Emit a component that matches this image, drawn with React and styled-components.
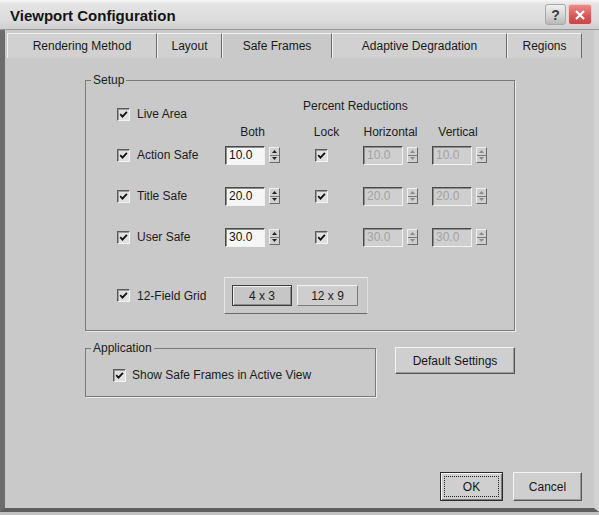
import React from 'react';
import styled, { createGlobalStyle } from 'styled-components';

const Global = createGlobalStyle`
  html, body { margin: 0; padding: 0; background: #c2c2c2; }
  body { font-family: "Liberation Sans", Arial, sans-serif; }
`;

const Window = styled.div`
  width: 599px;
  height: 515px;
  display: flex;
  flex-direction: column;
  background: #c2c2c2;
  font-size: 12px;
  color: #1c1c1c;
  overflow: hidden;
`;

const TitleBar = styled.div`
  height: 30px;
  flex: none;
  box-sizing: border-box;
  display: flex;
  align-items: center;
  padding: 0 7px 0 10px;
  background: linear-gradient(#f6f6f6 0, #e4e4e4 14%, #dcdcdc 70%, #cecece 100%);
  border-bottom: 1px solid #9a9a9a;
`;

const Title = styled.div`
  flex: 1;
  font-weight: bold;
  font-size: 15px;
  color: #141414;
  padding-top: 2px;
`;

const CaptionButtons = styled.div`
  display: flex;
  gap: 2px;
  align-items: center;
`;

const CaptionButton = styled.div`
  width: ${p => p.$w}px;
  height: 21px;
  box-sizing: border-box;
  border-radius: 3px;
  display: flex;
  align-items: center;
  justify-content: center;
  font-weight: bold;
  font-size: 14px;
  color: #3a3a3a;
  border: 1px solid ${p => (p.$danger ? '#f2c8c8' : '#a8a8a8')};
  background: ${p =>
    p.$danger
      ? 'linear-gradient(#ec8a8a, #d45656 60%, #c84848)'
      : 'linear-gradient(#f0f0f0, #d2d2d2 60%, #b8b8b8)'};
`;

const Frame = styled.div`
  flex: 1;
  min-height: 0;
  display: flex;
  flex-direction: column;
  background: #c9c9c9;
  border-left: 5px solid #6c6c6c;
  border-right: 5px solid #d2d2d2;
  border-bottom: 4px solid #5e5e5e;
  margin-bottom: 3px;
`;

const TabStrip = styled.div`
  display: flex;
  margin-top: 3px;
  padding-left: 2px;
  height: 25px;
  flex: none;
`;

const Tab = styled.div`
  width: ${p => p.$w}px;
  box-sizing: border-box;
  display: flex;
  align-items: center;
  justify-content: center;
  white-space: nowrap;
  background: ${p => (p.$active ? '#c9c9c9' : '#d1d1d1')};
  border-top: 1px solid #f2f2f2;
  border-left: 1px solid #f2f2f2;
  border-right: 1px solid #6a6a6a;
  color: #1a1a1a;
`;

const Panel = styled.div`
  flex: 1;
  display: flex;
  flex-direction: column;
  padding: 15px 0 0 80px;
`;

const Group = styled.fieldset`
  margin: 0;
  min-width: 0;
  width: ${p => p.$w}px;
  box-sizing: border-box;
  padding: 0;
  border: 1px solid #7a7a7a;
  box-shadow: 1px 1px 0 #ececec;
`;

const GroupLabel = styled.legend`
  margin-left: 5px;
  padding: 0 2px;
  line-height: 14px;
  font-size: 12px;
  color: #1c1c1c;
`;

const GroupBody = styled.div`
  padding: ${p => p.$pad};
`;

const Row = styled.div`
  display: grid;
  grid-template-columns: 108px 90px 48px 69px 57px;
  align-items: center;
  height: ${p => p.$h}px;
  margin-top: ${p => p.$mt || 0}px;
`;

const CheckLabel = styled.label`
  display: flex;
  align-items: center;
  gap: ${p => p.$gap || 7}px;
  white-space: nowrap;
`;

const Box = styled.span`
  width: 13px;
  height: 13px;
  flex: none;
  box-sizing: border-box;
  display: inline-flex;
  align-items: center;
  justify-content: center;
  background: #e0e0e0;
  border: 1px solid;
  border-color: #5a5a5a #f4f4f4 #f4f4f4 #5a5a5a;
  box-shadow: inset 1px 1px 0 #9c9c9c;
`;

const Check = () => (
  <Box>
    <svg width="9" height="9" viewBox="0 0 9 9">
      <path d="M1.2 4.2 L3.5 6.6 L7.9 1.8" fill="none" stroke="#111" strokeWidth="1.8" />
    </svg>
  </Box>
);

const Heading = styled.span`
  grid-column: 3 / span 3;
  align-self: start;
  margin: -5px 0 0 -12px;
  line-height: 14px;
  white-space: nowrap;
`;

const HeaderCell = styled.div`
  width: ${p => p.$w}px;
  display: flex;
  justify-content: center;
  white-space: nowrap;
  line-height: 14px;
`;

const SpinWrap = styled.div`
  display: flex;
  align-items: center;
  gap: 4px;
`;

const Field = styled.div`
  width: 40px;
  height: 19px;
  box-sizing: border-box;
  border: 1px solid;
  border-color: #4a4a4a #f2f2f2 #f2f2f2 #4a4a4a;
  box-shadow: inset 1px 1px 0 #8c8c8c;
  background: ${p => (p.$disabled ? '#cfcfcf' : '#f6f6f6')};
  color: ${p => (p.$disabled ? '#a2a2a2' : '#141414')};
  padding: 0 3px;
  line-height: 17px;
  overflow: hidden;
`;

const Spinner = styled.div`
  width: 11px;
  height: 16px;
  box-sizing: border-box;
  display: flex;
  flex-direction: column;
  border: 1px solid;
  border-color: #f0f0f0 #6a6a6a #6a6a6a #f0f0f0;
  background: #d0d0d0;
`;

const SpinHalf = styled.div`
  flex: 1;
  display: flex;
  align-items: center;
  justify-content: center;
  & + & {
    border-top: 1px solid #7a7a7a;
  }
`;

const Arrow = ({ down, color }) => (
  <svg width="5" height="3" viewBox="0 0 5 3">
    <path d={down ? 'M0 0 H5 L2.5 3 Z' : 'M0 3 H5 L2.5 0 Z'} fill={color} />
  </svg>
);

const SpinBox = ({ value, disabled }) => {
  const c = disabled ? '#8a8a8a' : '#222';
  return (
    <SpinWrap>
      <Field $disabled={disabled}>{value}</Field>
      <Spinner>
        <SpinHalf><Arrow color={c} /></SpinHalf>
        <SpinHalf><Arrow down color={c} /></SpinHalf>
      </Spinner>
    </SpinWrap>
  );
};

const GridFrame = styled.div`
  grid-column: 2 / span 4;
  margin-left: -1px;
  width: 144px;
  height: 37px;
  box-sizing: border-box;
  display: flex;
  align-items: center;
  gap: 5px;
  padding-left: 7px;
  border-top: 1px solid #ececec;
  border-left: 1px solid #e6e6e6;
  border-right: 1px solid #e0e0e0;
  border-bottom: 1px solid #6a6a6a;
`;

const ToggleButton = styled.div`
  width: ${p => p.$w}px;
  height: 21px;
  box-sizing: border-box;
  display: flex;
  align-items: center;
  justify-content: center;
  background: ${p => (p.$pressed ? '#c6c6c6' : '#cecece')};
  border: 1px solid;
  border-color: ${p => (p.$pressed ? '#3e3e3e' : '#f4f4f4 #7a7a7a #7a7a7a #f4f4f4')};
  box-shadow: ${p => (p.$pressed ? 'inset 1px 1px 0 #efefef, inset -1px -1px 0 #8a8a8a' : 'none')};
`;

const AppRow = styled.div`
  width: 430px;
  display: flex;
  justify-content: space-between;
  align-items: flex-start;
  margin-top: 10px;
`;

const PushButton = styled.button`
  font: inherit;
  color: #161616;
  width: ${p => p.$w}px;
  height: ${p => p.$h}px;
  margin-top: ${p => p.$mt || 0}px;
  padding: 0;
  background: #cfcfcf;
  border: 1px solid;
  border-color: ${p => (p.$default ? '#2a2a2a' : '#f4f4f4 #555 #555 #f4f4f4')};
  box-shadow: ${p =>
    p.$default
      ? 'inset 1px 1px 0 #f4f4f4, inset -1px -1px 0 #7a7a7a'
      : 'inset -1px -1px 0 #9a9a9a'};
  outline: ${p => (p.$default ? '1px dotted #222' : 'none')};
  outline-offset: -5px;
`;

const Footer = styled.div`
  margin-top: auto;
  display: flex;
  justify-content: flex-end;
  gap: 10px;
  padding: 0 12px 7px 0;
`;

const tabs = [
  { label: 'Rendering Method', w: 150 },
  { label: 'Layout', w: 65 },
  { label: 'Safe Frames', w: 110, active: true },
  { label: 'Adaptive Degradation', w: 175 },
  { label: 'Regions', w: 75 },
];

const frames = [
  { label: 'Action Safe', v: '10.0', mt: 6 },
  { label: 'Title Safe', v: '20.0', mt: 21 },
  { label: 'User Safe', v: '30.0', mt: 21 },
];

export default function App() {
  return (
    <>
      <Global />
      <Window>
        <TitleBar>
          <Title>Viewport Configuration</Title>
          <CaptionButtons>
            <CaptionButton $w={21}>?</CaptionButton>
            <CaptionButton $w={24} $danger>
              <svg width="12" height="12" viewBox="0 0 12 12">
                <path d="M2 2 L10 10 M10 2 L2 10" stroke="#fff" strokeWidth="2.2" />
              </svg>
            </CaptionButton>
          </CaptionButtons>
        </TitleBar>
        <Frame>
          <TabStrip>
            {tabs.map(t => (
              <Tab key={t.label} $w={t.w} $active={t.active}>{t.label}</Tab>
            ))}
          </TabStrip>
          <Panel>
            <Group $w={430}>
              <GroupLabel>Setup</GroupLabel>
              <GroupBody $pad="17px 0 16px 31px">
                <Row $h={20}>
                  <CheckLabel><Check />Live Area</CheckLabel>
                  <Heading>Percent Reductions</Heading>
                </Row>
                <Row $h={14} $mt={1}>
                  <span />
                  <HeaderCell $w={55}>Both</HeaderCell>
                  <HeaderCell $w={23}>Lock</HeaderCell>
                  <HeaderCell $w={55}>Horizontal</HeaderCell>
                  <HeaderCell $w={52}>Vertical</HeaderCell>
                </Row>
                {frames.map(f => (
                  <Row key={f.label} $h={20} $mt={f.mt}>
                    <CheckLabel><Check />{f.label}</CheckLabel>
                    <SpinBox value={f.v} />
                    <Check />
                    <SpinBox value={f.v} disabled />
                    <SpinBox value={f.v} disabled />
                  </Row>
                ))}
                <Row $h={37} $mt={30}>
                  <CheckLabel><Check />12-Field Grid</CheckLabel>
                  <GridFrame>
                    <ToggleButton $w={60} $pressed>4 x 3</ToggleButton>
                    <ToggleButton $w={61}>12 x 9</ToggleButton>
                  </GridFrame>
                </Row>
              </GroupBody>
            </Group>
            <AppRow>
              <Group $w={291}>
                <GroupLabel>Application</GroupLabel>
                <GroupBody $pad="13px 0 14px 27px">
                  <CheckLabel $gap={6}><Check />Show Safe Frames in Active View</CheckLabel>
                </GroupBody>
              </Group>
              <PushButton $w={120} $h={27} $mt={6}>Default Settings</PushButton>
            </AppRow>
            <Footer>
              <PushButton $w={63} $h={29} $default>OK</PushButton>
              <PushButton $w={69} $h={29}>Cancel</PushButton>
            </Footer>
          </Panel>
        </Frame>
      </Window>
    </>
  );
}
